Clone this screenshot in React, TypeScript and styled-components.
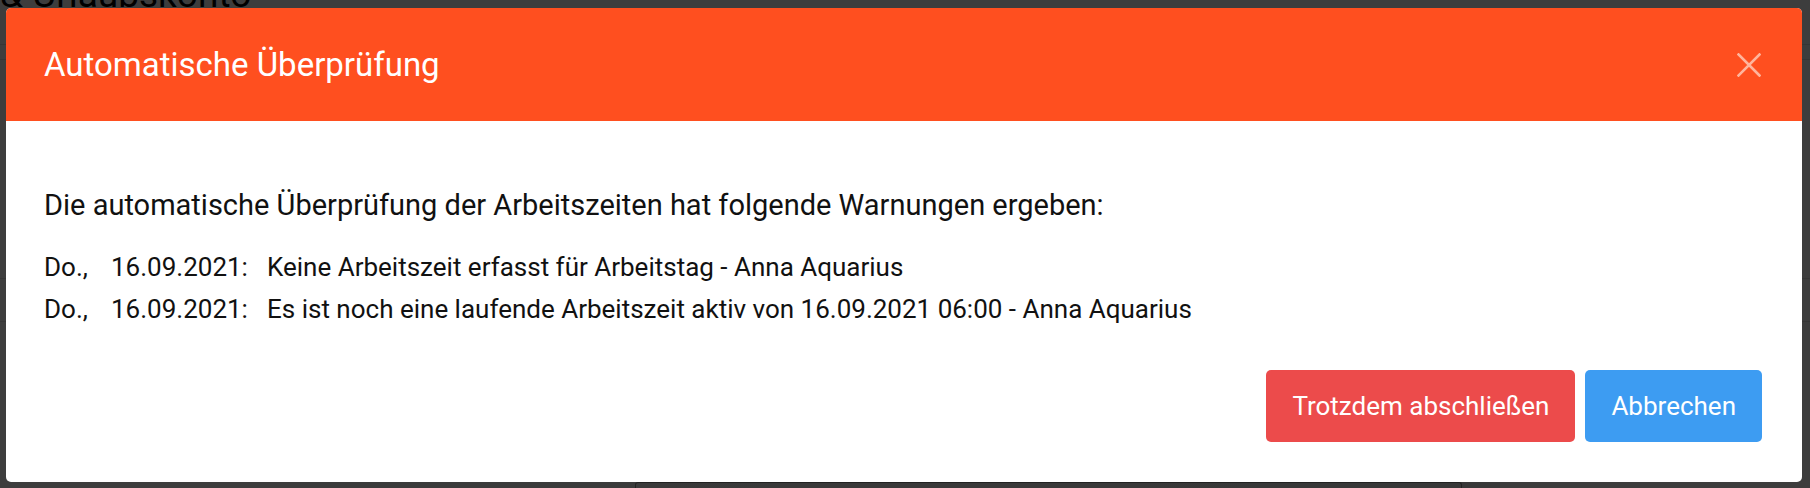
import React from "react";
import styled, { createGlobalStyle } from "styled-components";

const GlobalStyle = createGlobalStyle`
  html, body { margin: 0; padding: 0; }
  body {
    width: 1810px;
    height: 488px;
    overflow: hidden;
    background: #fff;
    font-family: Roboto, "Noto Sans", Arial, sans-serif;
  }
`;

/* ---------- underlying page (mostly hidden by the dialog) ---------- */
const Page = styled.div`
  position: relative;
  width: 1810px;
  height: 488px;
  overflow: hidden;
  background: #f4f4f4;
  display: flex;
  flex-direction: column;
`;

const PageTitle = styled.h1`
  margin: 0;
  height: 12px;
  font-size: 37px;
  line-height: 1;
  font-weight: 400;
  color: #000;
  padding-left: 0;
  margin-top: -24px;
  white-space: nowrap;
`;

const PageRule = styled.div<{ $gap: number }>`
  margin-top: ${(p) => p.$gap}px;
  height: 1px;
  background: #d8d8d8;
`;

const PageFooter = styled.div`
  margin-top: auto;
  height: 6px;
  display: grid;
  grid-template-columns: 300px 1200px 1fr;
`;

const FooterDark = styled.div`
  background: #f4f4f4;
`;

const FooterLight = styled.div`
  background: linear-gradient(90deg, #e8e8e8, #dedede);
  display: flex;
  padding-left: 335px;
`;

const FooterBox = styled.div`
  width: 825px;
  border: 1px solid #888;
  border-bottom: none;
  border-radius: 3px 3px 0 0;
`;

const Overlay = styled.div`
  position: absolute;
  inset: 0;
  background: rgba(0, 0, 0, 0.75);
`;

/* ---------- dialog ---------- */
const Dialog = styled.div`
  position: absolute;
  left: 6px;
  top: 8px;
  width: 1796px;
  height: 474px;
  background: #fff;
  border-radius: 5px;
  overflow: hidden;
  display: flex;
  flex-direction: column;
`;

const Header = styled.div`
  height: 113px;
  flex: none;
  background: #ff4f1f;
  display: flex;
  align-items: center;
  justify-content: space-between;
  padding: 0 41px 0 38px;
`;

const Title = styled.h2`
  margin: 0;
  font-size: 33px;
  font-weight: 400;
  color: #fff;
  letter-spacing: 0;
`;

const CloseButton = styled.button`
  width: 24px;
  height: 24px;
  padding: 0;
  border: none;
  background: transparent;
  display: flex;
  align-items: center;
  justify-content: center;
  cursor: pointer;
`;

const Body = styled.div`
  flex: 1;
  display: flex;
  flex-direction: column;
  padding: 0 40px 40px 38px;
`;

const Intro = styled.p`
  margin: 67px 0 0;
  font-size: 29px;
  line-height: 34px;
  color: #111;
  white-space: nowrap;
`;

const WarningList = styled.div`
  margin-top: 29px;
  display: grid;
  grid-template-columns: 67px 156px 1fr;
  row-gap: 10px;
  font-size: 26px;
  line-height: 32px;
  color: #111;
`;

const Cell = styled.span`
  white-space: nowrap;
`;

const Actions = styled.div`
  margin-top: auto;
  display: flex;
  justify-content: flex-end;
  gap: 10px;
`;

const ActionButton = styled.button<{ $tone: "danger" | "primary" }>`
  height: 72px;
  padding: 0 26px;
  border: none;
  border-radius: 5px;
  font-family: Roboto, "Noto Sans", Arial, sans-serif;
  font-size: 26px;
  color: #fff;
  background: ${(p) => (p.$tone === "danger" ? "#ec4b4b" : "#3d9cf2")};
  cursor: pointer;
`;

const warnings = [
  {
    day: "Do.,",
    date: "16.09.2021:",
    text: "Keine Arbeitszeit erfasst für Arbeitstag - Anna Aquarius",
  },
  {
    day: "Do.,",
    date: "16.09.2021:",
    text: "Es ist noch eine laufende Arbeitszeit aktiv von 16.09.2021 06:00 - Anna Aquarius",
  },
];

export default function App() {
  return (
    <>
      <GlobalStyle />
      <Page>
        <PageTitle>&amp; Urlaubskonto</PageTitle>
        <PageRule $gap={56} />
        <PageRule $gap={14} />
        <PageRule $gap={218} />
        <PageRule $gap={42} />
        <PageFooter>
          <FooterDark />
          <FooterLight>
            <FooterBox />
          </FooterLight>
          <FooterDark />
        </PageFooter>
        <Overlay />
        <Dialog role="dialog" aria-label="Automatische Überprüfung">
          <Header>
            <Title>Automatische Überprüfung</Title>
            <CloseButton aria-label="Schließen">
              <svg width="24" height="24" viewBox="0 0 24 24">
                <path
                  d="M1.5 1.5 L22.5 22.5 M22.5 1.5 L1.5 22.5"
                  stroke="#ffb49c"
                  strokeWidth="2.6"
                  strokeLinecap="square"
                  fill="none"
                />
              </svg>
            </CloseButton>
          </Header>
          <Body>
            <Intro>
              Die automatische Überprüfung der Arbeitszeiten hat folgende
              Warnungen ergeben:
            </Intro>
            <WarningList>
              {warnings.map((w, i) => (
                <React.Fragment key={i}>
                  <Cell>{w.day}</Cell>
                  <Cell>{w.date}</Cell>
                  <Cell>{w.text}</Cell>
                </React.Fragment>
              ))}
            </WarningList>
            <Actions>
              <ActionButton $tone="danger">Trotzdem abschließen</ActionButton>
              <ActionButton $tone="primary">Abbrechen</ActionButton>
            </Actions>
          </Body>
        </Dialog>
      </Page>
    </>
  );
}
